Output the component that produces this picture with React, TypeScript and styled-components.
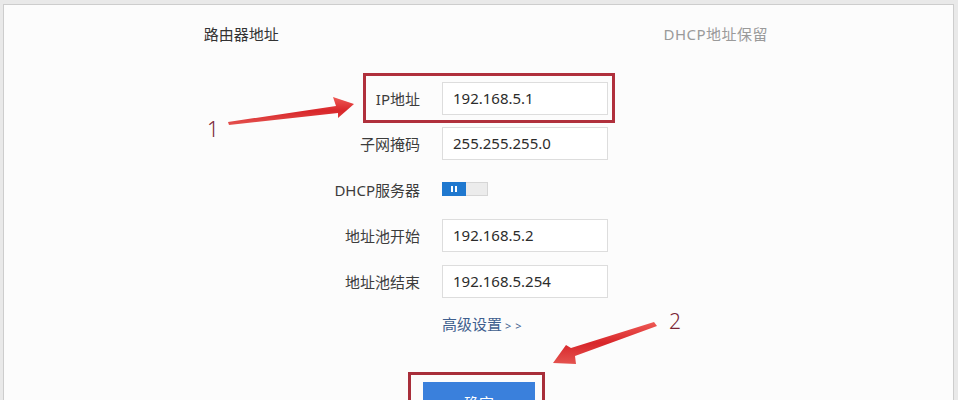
import React from 'react';
import styled, { createGlobalStyle } from 'styled-components';

const GlobalStyle = createGlobalStyle`
  body {
    margin: 0;
    background: #e9e9e9;
    font-family: "Noto Sans", "Noto Sans CJK SC", sans-serif;
    color: #3a3a3a;
  }
`;

const Page = styled.div`
  position: relative;
  width: 958px;
  height: 400px;
  overflow: hidden;
  padding-top: 4px;
  box-sizing: border-box;
`;

const Card = styled.div`
  margin: 0 4px 0 3px;
  height: 420px;
  border: 1px solid #cdcdcd;
  background: #fcfcfc;
`;

const TabBar = styled.div`
  display: grid;
  grid-template-columns: 1fr 1fr;
  height: 56px;
  align-items: center;
`;

const Tab = styled.div<{ $active?: boolean }>`
  text-align: center;
  font-size: 15px;
  color: ${(p) => (p.$active ? '#333' : '#9a9a9a')};
  letter-spacing: ${(p) => (p.$active ? '0' : '0.5px')};
`;

const Form = styled.div`
  display: flex;
  flex-direction: column;
  margin: 12px 0 0 326px;
  width: 290px;
`;

const Label = styled.div`
  width: 90px;
  margin-right: 22px;
  text-align: right;
  font-size: 15px;
  color: #3c3c3c;
  white-space: nowrap;
`;

const Row = styled.div`
  display: flex;
  align-items: center;
  flex-shrink: 0;
  height: 46px;
`;

const HighlightRow = styled(Row)`
  box-sizing: border-box;
  height: 50px;
  width: 252px;
  margin-left: 33px;
  margin-bottom: -3px;
  border: 3px solid #b0303c;

  & > ${Label} {
    width: 54px;
  }
`;

const Field = styled.input`
  box-sizing: border-box;
  width: 166px;
  height: 33px;
  padding: 0 0 0 10px;
  border: 1px solid #dddddd;
  background: #fff;
  font-family: inherit;
  font-size: 15px;
  color: #2c2c2c;
  outline: none;
`;

const Toggle = styled.div`
  display: flex;
  width: 46px;
  height: 14px;
  border: 1px solid #d6d6d6;
  box-sizing: border-box;
  background: #ececec;
`;

const ToggleKnob = styled.div`
  width: 24px;
  margin: -1px 0 -1px -1px;
  background: #1f78cf;
  display: flex;
  align-items: center;
  justify-content: center;
  gap: 2px;
`;

const KnobMark = styled.span`
  width: 2px;
  height: 6px;
  background: #fff;
`;

const MoreLink = styled.div`
  margin: 10px 0 0 112px;
  height: 20px;
  line-height: 20px;
  font-size: 15px;
  color: #3f5f8e;
  white-space: nowrap;
`;

const Chevrons = styled.span`
  font-size: 11px;
  letter-spacing: 4px;
  margin-left: 3px;
`;

const ButtonFrame = styled.div`
  align-self: flex-start;
  margin: 38px 0 0 78px;
  padding: 7px 7px 7px 12px;
  border: 3px solid #a82e3a;
`;

const SubmitButton = styled.button`
  display: block;
  width: 112px;
  height: 40px;
  border: none;
  background: #3a80dc;
  color: #fff;
  font-family: inherit;
  font-size: 15px;
`;

const Overlay = styled.svg`
  position: absolute;
  left: 0;
  top: 0;
  pointer-events: none;
`;

const Marker = styled.span<{ $x: number; $y: number }>`
  position: absolute;
  left: ${(p) => p.$x}px;
  top: ${(p) => p.$y}px;
  font-size: 21px;
  line-height: 21px;
  font-weight: 300;
  color: #7a2535;
`;

export default function App() {
  return (
    <>
      <GlobalStyle />
      <Page>
        <Card>
          <TabBar>
            <Tab $active>路由器地址</Tab>
            <Tab>DHCP地址保留</Tab>
          </TabBar>
          <Form>
            <HighlightRow>
              <Label>IP地址</Label>
              <Field readOnly value="192.168.5.1" />
            </HighlightRow>
            <Row>
              <Label>子网掩码</Label>
              <Field readOnly value="255.255.255.0" />
            </Row>
            <Row>
              <Label>DHCP服务器</Label>
              <Toggle>
                <ToggleKnob>
                  <KnobMark />
                  <KnobMark />
                </ToggleKnob>
              </Toggle>
            </Row>
            <Row>
              <Label>地址池开始</Label>
              <Field readOnly value="192.168.5.2" />
            </Row>
            <Row>
              <Label>地址池结束</Label>
              <Field readOnly value="192.168.5.254" />
            </Row>
            <MoreLink>
              高级设置<Chevrons>&gt;&gt;</Chevrons>
            </MoreLink>
            <ButtonFrame>
              <SubmitButton type="button">确定</SubmitButton>
            </ButtonFrame>
          </Form>
        </Card>

        <Overlay width="958" height="400" viewBox="0 0 958 400">
          <defs>
            <linearGradient id="arrowFill" x1="0" y1="0" x2="0" y2="1">
              <stop offset="0" stopColor="#ee5a55" />
              <stop offset="0.5" stopColor="#d8262a" />
              <stop offset="1" stopColor="#e4534f" />
            </linearGradient>
          </defs>
          <polygon
            points="228,122 336,106 333,97 354,104 338,118 338,113 229,125"
            fill="url(#arrowFill)"
          />
          <polygon
            points="654,322 571,348 566,345 553,363 576,364 575,356 657,326"
            fill="url(#arrowFill)"
          />
        </Overlay>
        <Marker $x={207} $y={119}>1</Marker>
        <Marker $x={669} $y={311}>2</Marker>
      </Page>
    </>
  );
}
